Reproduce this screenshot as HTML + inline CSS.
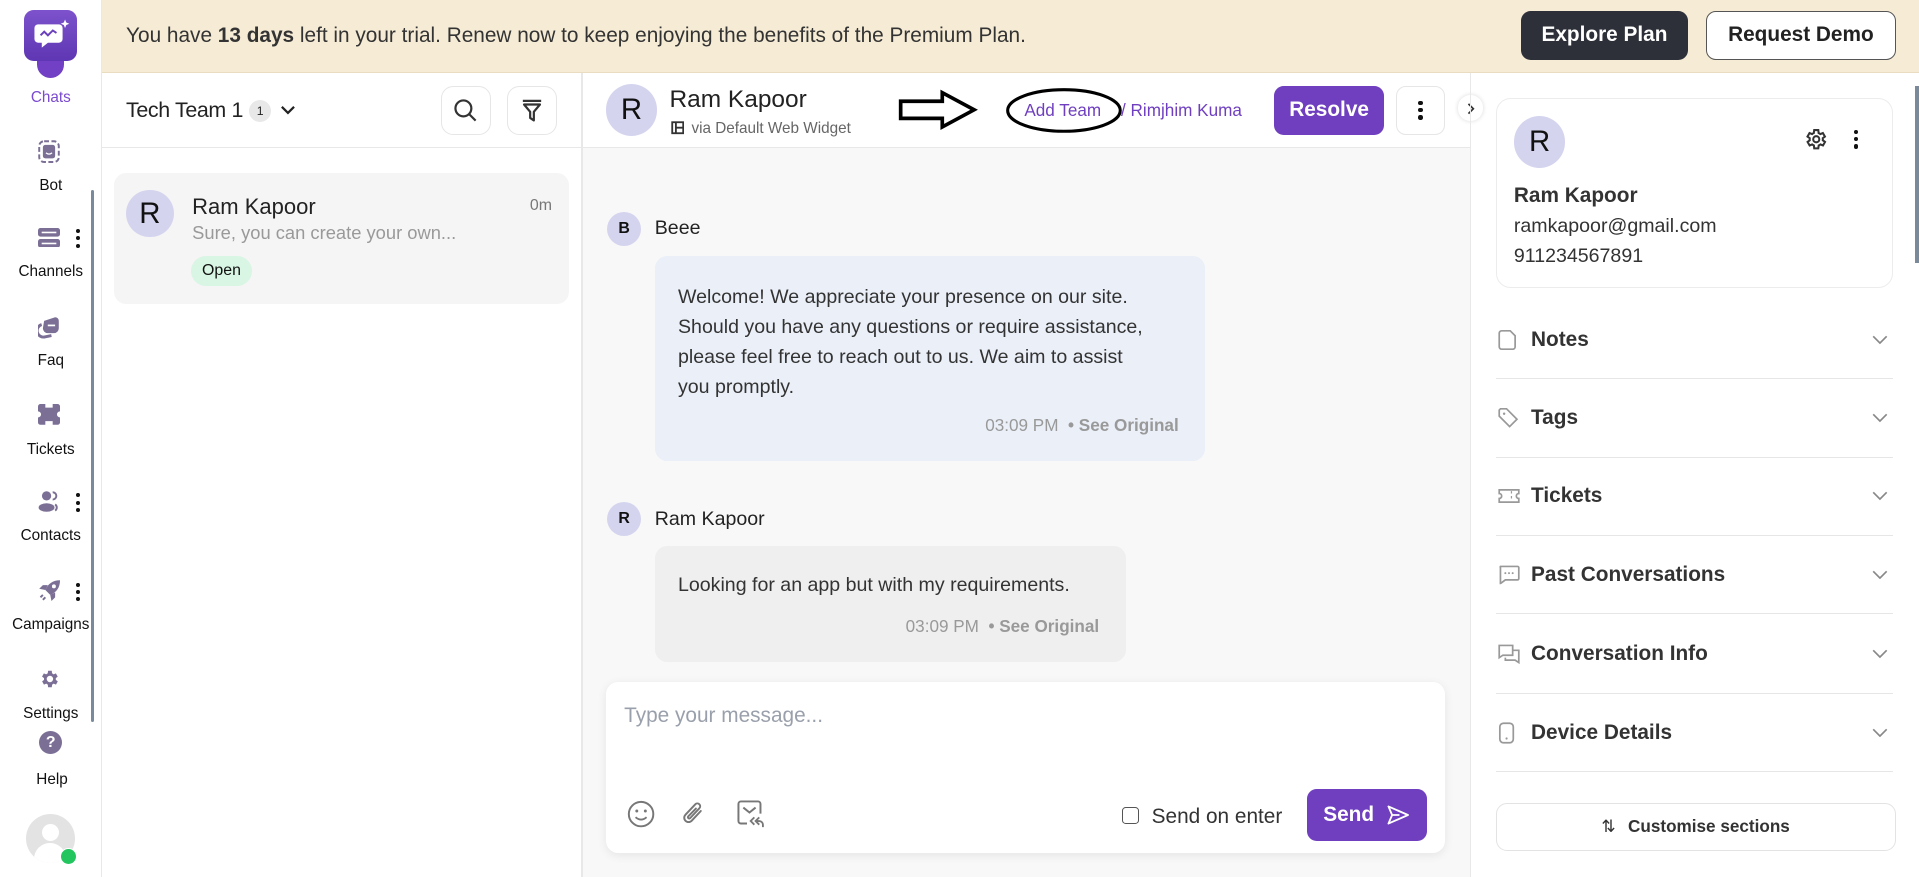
<!DOCTYPE html>
<html><head><meta charset="utf-8"><style>
*{box-sizing:border-box;margin:0;padding:0}
html,body{width:1919px;height:877px;overflow:hidden;background:#fff}
#r{position:relative;width:1568px;height:717px;zoom:1.22385;font-family:"Liberation Sans",sans-serif;color:#222;overflow:hidden}
.a{position:absolute}
.t{position:absolute;white-space:nowrap;line-height:1}
.av{position:absolute;border-radius:50%;background:#d4d4ef;display:flex;align-items:center;justify-content:center;color:#111}
.nl{position:absolute;width:83px;text-align:center;font-size:12.5px;color:#111;left:0}
.ni{position:absolute;left:31px}
.dots{position:absolute;left:62px;width:4px}
.dots i{display:block;width:3.5px;height:3.5px;border-radius:50%;background:#111;margin-bottom:2.5px}
.sec{position:absolute;left:1222px;width:325px;height:64px;border-bottom:1px solid #e6e6e6}
.sec .l{position:absolute;left:29px;top:50%;transform:translateY(-50%);font-size:17px;font-weight:bold;color:#333}
.sec svg.ic{position:absolute;left:2px;top:50%;transform:translateY(-50%)}
.sec svg.ch{position:absolute;right:4px;top:50%;transform:translateY(-50%)}
.btn{position:absolute;border-radius:8px;display:flex;align-items:center;justify-content:center}
</style></head><body><div id="r">

<!-- sidebar -->
<div class="a" style="left:0;top:0;width:83px;height:717px;border-right:1px solid #e8e8e8;background:#fff"></div>
<div class="a" style="left:30px;top:44px;width:22px;height:20px;border-radius:0 0 11px 11px;background:#7240c4"></div>
<div class="a" style="left:20px;top:8px;width:43px;height:42px;border-radius:8px;background:linear-gradient(#7d52cc,#5f36b3)"></div>
<svg class="a" style="left:26px;top:14px" width="32" height="30" viewBox="0 0 32 30"><path d="M5 6h17a3 3 0 0 1 3 3v9a3 3 0 0 1-3 3H13l-5 4v-4H5a3 3 0 0 1-3-3V9a3 3 0 0 1 3-3z" fill="#fff"/><path d="M7 15l3-3 3 3 4-4 3 2" stroke="#6a40bd" stroke-width="1.6" fill="none"/><path d="M27 2l1 2.5 2.5 1-2.5 1-1 2.5-1-2.5-2.5-1 2.5-1z" fill="#fff"/></svg>
<div class="nl" style="top:73px;color:#7a4ad0">Chats</div>
<svg class="ni" style="top:114px" width="18" height="19" viewBox="0 0 18 19"><rect x="1" y="1" width="16" height="17" rx="4" fill="none" stroke="#7b6f96" stroke-width="1.6" stroke-dasharray="4 2"/><rect x="4" y="4" width="10" height="11" rx="2" fill="#7b6f96"/><path d="M6.5 10.5q2.5 2 5 0" stroke="#fff" fill="none"/></svg>
<div class="nl" style="top:145px">Bot</div>
<svg class="ni" style="top:186px" width="18" height="16" viewBox="0 0 18 16"><rect x="0" y="0" width="18" height="7" rx="2" fill="#7b6f96"/><rect x="0" y="9" width="18" height="7" rx="2" fill="#7b6f96"/><rect x="3" y="3" width="12" height="1.3" fill="#fff"/><rect x="3" y="12" width="12" height="1.3" fill="#fff"/></svg>
<div class="dots" style="top:187px"><i></i><i></i><i></i></div>
<div class="nl" style="top:215px">Channels</div>
<svg class="ni" style="top:258px" width="18" height="19" viewBox="0 0 18 19"><path d="M5 4l9-3a3 3 0 0 1 3 3v6a4 4 0 0 1-4 4H8a4 4 0 0 1-4-4z" fill="#7b6f96"/><path d="M3 7a4 4 0 0 0 3 10l5-1" stroke="#7b6f96" stroke-width="2.4" fill="none"/><rect x="8" y="7" width="6" height="1.4" fill="#fff"/></svg>
<div class="nl" style="top:288px">Faq</div>
<svg class="ni" style="top:330px" width="18" height="17" viewBox="0 0 18 17"><path d="M0 2a2 2 0 0 1 2-2h4v3h6V0h4a2 2 0 0 1 2 2v4a2 2 0 0 0 0 5v4a2 2 0 0 1-2 2h-4v-3H6v3H2a2 2 0 0 1-2-2v-4a2 2 0 0 0 0-5z" fill="#7b6f96"/></svg>
<div class="nl" style="top:360px">Tickets</div>
<svg class="ni" style="top:401px" width="18" height="18" viewBox="0 0 18 18"><circle cx="7" cy="4" r="3.8" fill="#7b6f96"/><ellipse cx="7" cy="13.5" rx="6.5" ry="3.5" fill="#7b6f96"/><path d="M12 1a3 3 0 0 1 0 6M14 11a3 3 0 0 1 0 5" stroke="#7b6f96" stroke-width="1.6" fill="none"/></svg>
<div class="dots" style="top:403px"><i></i><i></i><i></i></div>
<div class="nl" style="top:431px">Contacts</div>
<svg class="ni" style="top:473px" width="19" height="19" viewBox="0 0 19 19"><path d="M18 1c-6 0-10 3-12 8l4 4c5-2 8-6 8-12z" fill="#7b6f96"/><path d="M6 9L1 8l3-3h4zM10 13l1 5 3-3v-4z" fill="#7b6f96"/><circle cx="13" cy="6" r="1.6" fill="#fff"/><path d="M4 13l-2 2M6 15l-2 2" stroke="#7b6f96" stroke-width="1.6"/></svg>
<div class="dots" style="top:476px"><i></i><i></i><i></i></div>
<div class="nl" style="top:503px">Campaigns</div>
<svg class="ni" style="top:546px" width="18" height="18" viewBox="0 0 24 24"><path fill="#7b6f96" d="M19.4 13a7.5 7.5 0 0 0 0-2l2.1-1.6-2-3.5-2.5 1a7 7 0 0 0-1.7-1L15 3h-4l-.4 2.9a7 7 0 0 0-1.7 1l-2.5-1-2 3.5L6.6 11a7.5 7.5 0 0 0 0 2l-2.1 1.6 2 3.5 2.5-1a7 7 0 0 0 1.7 1L11 21h4l.4-2.9a7 7 0 0 0 1.7-1l2.5 1 2-3.5zM13 15.5a3.5 3.5 0 1 1 0-7 3.5 3.5 0 0 1 0 7z"/></svg>
<div class="nl" style="top:576px">Settings</div>
<div class="a" style="left:32px;top:597px;width:19px;height:19px;border-radius:50%;background:#7b6f96;color:#fff;font-size:13px;font-weight:bold;text-align:center;line-height:19px">?</div>
<div class="nl" style="top:630px;left:1px">Help</div>
<div class="a" style="left:21px;top:665px;width:40px;height:40px;border-radius:50%;background:#e3e3e3;overflow:hidden"><div class="a" style="left:13px;top:8px;width:14px;height:14px;border-radius:50%;background:#fff"></div><div class="a" style="left:7px;top:24px;width:26px;height:22px;border-radius:13px 13px 0 0;background:#fff"></div></div>
<div class="a" style="left:49px;top:693px;width:14px;height:14px;border-radius:50%;background:#22c55e;border:1.5px solid #fff"></div>
<div class="a" style="left:74px;top:155px;width:3px;height:435px;background:#7a8a9a;border-radius:2px"></div>

<!-- banner -->
<div class="a" style="left:83px;top:0;width:1485px;height:60px;background:#f6ebd5;border-bottom:1px solid #eadcc0"></div>
<div class="t" style="left:103px;top:21px;font-size:17px;color:#333">You have <b>13 days</b> left in your trial. Renew now to keep enjoying the benefits of the Premium Plan.</div>
<div class="btn" style="left:1243px;top:9px;width:136px;height:40px;background:#2d3039;color:#fff;font-size:17px;font-weight:bold">Explore Plan</div>
<div class="btn" style="left:1394px;top:9px;width:155px;height:40px;background:#fff;border:1px solid #555;color:#222;font-size:17px;font-weight:bold">Request Demo</div>

<!-- list panel -->
<div class="a" style="left:475px;top:60px;width:1px;height:657px;background:#e8e8e8"></div>
<div class="a" style="left:83px;top:120px;width:392px;height:1px;background:#e8e8e8"></div>
<div class="a" style="left:103px;top:80px;display:flex;align-items:center;height:21px">
<span style="font-size:17.5px;color:#222;letter-spacing:-0.3px">Tech Team 1</span>
<span style="margin-left:5px;width:18px;height:18px;border-radius:50%;background:#e8e8e8;font-size:10px;text-align:center;line-height:18px">1</span>
<svg style="margin-left:7px" width="13" height="9" viewBox="0 0 13 9"><path d="M1.5 1.5l5 5 5-5" stroke="#222" stroke-width="1.8" fill="none"/></svg></div>
<div class="btn" style="left:360px;top:70px;width:41px;height:40px;border:1px solid #e6e6e6;border-radius:10px"><svg width="20" height="20" viewBox="0 0 20 20"><circle cx="8.5" cy="8.5" r="6.5" stroke="#333" stroke-width="1.8" fill="none"/><path d="M13.5 13.5l5 5" stroke="#333" stroke-width="1.8"/></svg></div>
<div class="btn" style="left:414px;top:70px;width:41px;height:40px;border:1px solid #e6e6e6;border-radius:10px"><svg width="18" height="19" viewBox="0 0 18 19"><path d="M1.5 1.5h15M2.5 4.5h13l-5 6v7l-3-2v-5z" stroke="#333" stroke-width="1.8" fill="none" stroke-linejoin="round"/></svg></div>
<div class="a" style="left:93px;top:141px;width:372px;height:107px;border-radius:10px;background:#f5f5f5"></div>
<div class="av" style="left:103px;top:155px;width:39px;height:39px;font-size:24px">R</div>
<div class="t" style="left:157px;top:160px;font-size:18px;color:#222">Ram Kapoor</div>
<div class="t" style="left:433px;top:162px;font-size:13px;color:#777">0m</div>
<div class="t" style="left:157px;top:183px;font-size:15px;color:#999">Sure, you can create your own...</div>
<div class="a" style="left:156px;top:209px;width:50px;height:25px;border-radius:13px;background:#d9f5e3;font-size:13px;text-align:center;line-height:25px;color:#111">Open</div>

<!-- chat -->
<div class="a" style="left:476px;top:121px;width:725px;height:596px;background:#f8f8f8"></div>
<div class="a" style="left:476px;top:120px;width:725px;height:1px;background:#e8e8e8"></div>
<div class="av" style="left:495px;top:69px;width:42px;height:42px;font-size:24px">R</div>
<div class="t" style="left:547px;top:72px;font-size:20px;color:#222">Ram Kapoor</div>
<svg class="a" style="left:548px;top:99px" width="11" height="11" viewBox="0 0 11 11"><rect x="1" y="1" width="9" height="9" stroke="#333" stroke-width="1.5" fill="none"/><path d="M4 1v9M4 5.5h6" stroke="#333" stroke-width="1.5"/></svg>
<div class="t" style="left:565px;top:99px;font-size:12.5px;color:#666">via Default Web Widget</div>
<svg class="a" style="left:733px;top:73px" width="66" height="34" viewBox="0 0 66 34"><path d="M3 10h34V3l26 14-26 14v-7H3z" fill="#fff" stroke="#000" stroke-width="3" stroke-linejoin="miter"/></svg>
<svg class="a" style="left:820px;top:70px" width="98" height="40" viewBox="0 0 98 40"><ellipse cx="49" cy="20" rx="46" ry="17" fill="none" stroke="#000" stroke-width="2.5"/></svg>
<div class="t" style="left:837px;top:83px;font-size:14px;color:#6f3fbf">Add Team</div>
<div class="t" style="left:916px;top:83px;font-size:14px;color:#6f3fbf">/ Rimjhim Kuma</div>
<div class="btn" style="left:1041px;top:70px;width:90px;height:40px;background:#6f3fbf;color:#fff;font-size:17px;font-weight:bold">Resolve</div>
<div class="btn" style="left:1141px;top:70px;width:40px;height:40px;border:1px solid #e6e6e6;background:#fff"><div class="dots" style="position:static"><i></i><i></i><i style="margin:0"></i></div></div>
<div class="a" style="left:1191px;top:78px;width:21px;height:21px;border-radius:50%;background:#fff;box-shadow:0 0 4px rgba(0,0,0,.15)"></div>
<svg class="a" style="left:1198px;top:83px" width="8" height="11" viewBox="0 0 8 11"><path d="M2 1.5l4 4-4 4" stroke="#333" stroke-width="1.4" fill="none"/></svg>

<div class="av" style="left:496px;top:173px;width:28px;height:28px;font-size:13px;font-weight:bold">B</div>
<div class="t" style="left:535px;top:179px;font-size:16px;color:#222">Beee</div>
<div class="a" style="left:535px;top:209px;width:450px;height:168px;border-radius:10px;background:#eaeff8"></div>
<div class="a" style="left:554px;top:231px;width:388px;font-size:16px;line-height:24.5px;color:#333">Welcome! We appreciate your presence on our site. Should you have any questions or require assistance, please feel free to reach out to us. We aim to assist you promptly.</div>
<div class="t" style="left:805px;top:341px;font-size:14px;color:#999">03:09 PM &nbsp;<b>• See Original</b></div>

<div class="av" style="left:496px;top:410px;width:28px;height:28px;font-size:13px;font-weight:bold">R</div>
<div class="t" style="left:535px;top:417px;font-size:16px;color:#222">Ram Kapoor</div>
<div class="a" style="left:535px;top:446px;width:385px;height:95px;border-radius:10px;background:#efefef"></div>
<div class="t" style="left:554px;top:471px;font-size:16px;color:#333">Looking for an app but with my requirements.</div>
<div class="t" style="left:740px;top:505px;font-size:14px;color:#999">03:09 PM &nbsp;<b>• See Original</b></div>

<div class="a" style="left:495px;top:557px;width:686px;height:140px;border-radius:10px;background:#fff;box-shadow:0 2px 8px rgba(0,0,0,.08)"></div>
<div class="t" style="left:510px;top:577px;font-size:17px;color:#9aa0ab">Type your message...</div>
<svg class="a" style="left:512px;top:654px" width="23" height="23" viewBox="0 0 23 23"><circle cx="11.5" cy="11.5" r="10" stroke="#777" stroke-width="1.6" fill="none"/><circle cx="8" cy="9" r="1.2" fill="#777"/><circle cx="15" cy="9" r="1.2" fill="#777"/><path d="M7 14q4.5 4 9 0" stroke="#777" stroke-width="1.5" fill="none"/></svg>
<svg class="a" style="left:556px;top:654px" width="22" height="23" viewBox="0 0 22 23"><path d="M17 9l-7.5 8a3.5 3.5 0 0 1-5-5l8-8.5a2.3 2.3 0 0 1 3.3 3.3l-7.5 8a1 1 0 0 1-1.5-1.5L13 7" stroke="#777" stroke-width="1.6" fill="none" stroke-linecap="round"/></svg>
<svg class="a" style="left:601px;top:653px" width="25" height="25" viewBox="0 0 25 25"><path d="M9 20H4a2 2 0 0 1-2-2V4a2 2 0 0 1 2-2h14a2 2 0 0 1 2 2v8" stroke="#777" stroke-width="1.6" fill="none"/><path d="M6 7l5 4 5-4" stroke="#777" stroke-width="1.6" fill="none"/><path d="M15 15l-3 3 3 3M19 15l-3 3 3 3v0M16 18h3a3 3 0 0 1 3 3v2" stroke="#777" stroke-width="1.5" fill="none"/></svg>
<div class="a" style="left:917px;top:659px;width:14px;height:14px;border:1.3px solid #555;border-radius:3px"></div>
<div class="t" style="left:941px;top:659px;font-size:17px;color:#333">Send on enter</div>
<div class="btn" style="left:1068px;top:645px;width:98px;height:42px;background:#6f3fbf;color:#fff;font-size:17px;font-weight:bold">Send <svg style="margin-left:10px" width="20" height="18" viewBox="0 0 20 18"><path d="M2 2l16 7-16 7 3-7z M5 9h6" stroke="#fff" stroke-width="1.5" fill="none" stroke-linejoin="round"/></svg></div>

<!-- right panel -->
<div class="a" style="left:1201px;top:60px;width:1px;height:657px;background:#e8e8e8"></div>
<div class="a" style="left:1565px;top:70px;width:3px;height:145px;background:#7a8a9a"></div>
<div class="a" style="left:1222px;top:80px;width:325px;height:155px;border:1px solid #ececec;border-radius:12px"></div>
<div class="av" style="left:1237px;top:95px;width:42px;height:42px;font-size:24px">R</div>
<svg class="a" style="left:1473px;top:104px" width="20" height="20" viewBox="0 0 24 24"><path fill="none" stroke="#333" stroke-width="2" d="M19.4 13a7.5 7.5 0 0 0 0-2l2.1-1.6-2-3.5-2.5 1a7 7 0 0 0-1.7-1L15 3h-4l-.4 2.9a7 7 0 0 0-1.7 1l-2.5-1-2 3.5L6.6 11a7.5 7.5 0 0 0 0 2l-2.1 1.6 2 3.5 2.5-1a7 7 0 0 0 1.7 1L11 21h4l.4-2.9a7 7 0 0 0 1.7-1l2.5 1 2-3.5z"/><circle cx="13" cy="12" r="3" fill="none" stroke="#333" stroke-width="2"/></svg>
<div class="dots" style="left:1515px;top:106px"><i></i><i></i><i></i></div>
<div class="t" style="left:1237px;top:152px;font-size:17px;font-weight:bold;color:#333">Ram Kapoor</div>
<div class="t" style="left:1237px;top:177px;font-size:16px;color:#333">ramkapoor@gmail.com</div>
<div class="t" style="left:1237px;top:202px;font-size:16px;color:#333">911234567891</div>

<div class="sec" style="top:246px"><svg class="ic" width="16" height="17" viewBox="0 0 16 17"><path d="M3 1h7l4 4v9a2 2 0 0 1-2 2H3a2 2 0 0 1-2-2V3a2 2 0 0 1 2-2z" stroke="#999" stroke-width="1.4" fill="none"/></svg><span class="l">Notes</span><svg class="ch" width="13" height="8" viewBox="0 0 13 8"><path d="M1 1l5.5 5.5L12 1" stroke="#888" stroke-width="1.4" fill="none"/></svg></div>
<div class="sec" style="top:310px"><svg class="ic" width="17" height="17" viewBox="0 0 17 17"><path d="M1 2v5l8.5 8.5 6-6L7 1H2z" stroke="#999" stroke-width="1.4" fill="none"/><circle cx="5" cy="5" r="1" fill="#999"/></svg><span class="l">Tags</span><svg class="ch" width="13" height="8" viewBox="0 0 13 8"><path d="M1 1l5.5 5.5L12 1" stroke="#888" stroke-width="1.4" fill="none"/></svg></div>
<div class="sec" style="top:374px"><svg class="ic" width="18" height="14" viewBox="0 0 18 14"><path d="M1 2h16v3a2 2 0 0 0 0 4v3H1V9a2 2 0 0 0 0-4z" stroke="#999" stroke-width="1.4" fill="none"/><path d="M11 3v8" stroke="#999" stroke-dasharray="2 2"/></svg><span class="l">Tickets</span><svg class="ch" width="13" height="8" viewBox="0 0 13 8"><path d="M1 1l5.5 5.5L12 1" stroke="#888" stroke-width="1.4" fill="none"/></svg></div>
<div class="sec" style="top:438px"><svg class="ic" width="18" height="16" viewBox="0 0 18 16"><path d="M2 1h14a1 1 0 0 1 1 1v9a1 1 0 0 1-1 1H6l-4 3V2a1 1 0 0 1 0-1z" stroke="#999" stroke-width="1.4" fill="none"/><circle cx="6" cy="6.5" r=".8" fill="#999"/><circle cx="9" cy="6.5" r=".8" fill="#999"/><circle cx="12" cy="6.5" r=".8" fill="#999"/></svg><span class="l">Past Conversations</span><svg class="ch" width="13" height="8" viewBox="0 0 13 8"><path d="M1 1l5.5 5.5L12 1" stroke="#888" stroke-width="1.4" fill="none"/></svg></div>
<div class="sec" style="top:503px"><svg class="ic" width="18" height="16" viewBox="0 0 18 16"><path d="M1 1h11v8H4l-3 2z M6 11v2h8l3 2V5h-5" stroke="#999" stroke-width="1.4" fill="none"/></svg><span class="l">Conversation Info</span><svg class="ch" width="13" height="8" viewBox="0 0 13 8"><path d="M1 1l5.5 5.5L12 1" stroke="#888" stroke-width="1.4" fill="none"/></svg></div>
<div class="sec" style="top:567px"><svg class="ic" width="14" height="18" viewBox="0 0 14 18"><rect x="1.5" y="1" width="11" height="16" rx="3" stroke="#999" stroke-width="1.4" fill="none"/><circle cx="7" cy="13.5" r=".9" fill="#999"/></svg><span class="l">Device Details</span><svg class="ch" width="13" height="8" viewBox="0 0 13 8"><path d="M1 1l5.5 5.5L12 1" stroke="#888" stroke-width="1.4" fill="none"/></svg></div>

<div class="btn" style="left:1222px;top:656px;width:327px;height:39px;border:1px solid #e3e3e3;border-radius:9px;font-size:14px;font-weight:bold;color:#333"><span style="margin-right:10px;font-weight:normal">⇅</span>Customise sections</div>

</div></body></html>
